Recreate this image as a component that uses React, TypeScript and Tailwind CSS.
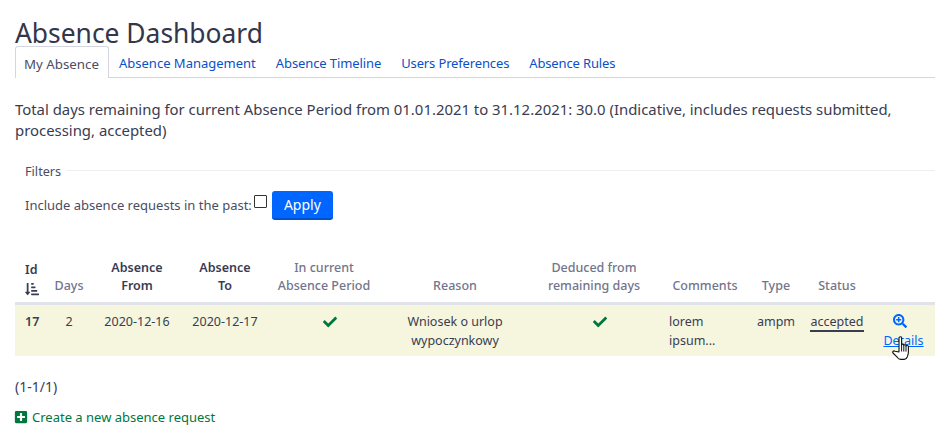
import { FaCheck, FaPlusSquare, FaSearchPlus, FaSortAmountDownAlt } from 'react-icons/fa'

const tabs = [
  { label: 'Absence Management', className: 'tracking-normal' },
  { label: 'Absence Timeline', className: 'tracking-[-0.1px]' },
  { label: 'Users Preferences', className: 'tracking-[-0.14px]' },
  { label: 'Absence Rules', className: 'tracking-[-0.14px]' },
]

const HandCursor = () => (
  <svg className="absolute left-[9px] top-[24px]" width="18" height="25" viewBox="0 0 18 25">
    <path
      d="M7 2c0-1.6 2.6-1.6 2.6 0v7c0-1.2 2.2-1.2 2.2 0v.6c0-1.2 2.2-1.2 2.2 0v.6c0-1.2 2.4-1 2.4.4v5.4c0 2.6-.8 3.6-1.2 5-.4 1.2-1.4 2.4-3 2.4H8.6c-1.8 0-2.6-1-3.4-2.2L1 17c-.9-1.4.8-2.6 2-1.8L7 16z"
      fill="#fff"
      stroke="#111"
      strokeWidth="1.1"
      strokeLinejoin="round"
    />
    <path d="M9.6 9v6.5M11.8 9.6v6M14 10.2v5.4" stroke="#111" strokeWidth="1" />
  </svg>
)

export default function App() {
  return (
    <div className="w-[950px] h-[439px] overflow-hidden bg-white pl-[15px] pr-[15px] text-[#3a3c52] font-['Noto_Sans',sans-serif]">
      <h1 className="pt-[14px] text-[26.4px] leading-[38px] h-[46px] text-[#34364a]">Absence Dashboard</h1>

      <nav className="flex h-[32px] border-b border-[#d3d5e0] text-[13px]">
        <div className="h-[32px] w-[94px] pl-[8px] pt-[1px] leading-[32px] text-[13.3px] bg-white border border-b-0 border-[#d3d5e0] rounded-t-[3px] text-[#4b4d63]">
          My Absence
        </div>
        {tabs.map((tab) => (
          <a key={tab.label} className={`px-[10px] pt-[1px] leading-[32px] text-[#0a50c8] ${tab.className}`}>
            {tab.label}
          </a>
        ))}
      </nav>

      <p className="mt-[21px] text-[14.9px] leading-[21px] w-[905px]">
        Total days remaining for current Absence Period from 01.01.2021 to 31.12.2021: 30.0 (Indicative, includes requests submitted, processing, accepted)
      </p>

      <div className="mt-[18px] flex items-center">
        <span className="w-[9px]" />
        <span className="px-[1px] pt-[2px] text-[12.7px] leading-[20px] text-[#4b4d63]">Filters</span>
        <span className="ml-[5px] flex-1 border-t border-[#eeeeee]" />
      </div>

      <div className="mt-[9px] pl-[10px] flex items-center text-[13px] h-[30px] text-[#4b4d63]">
        <span className="pt-[2px]">Include absence requests in the past:</span>
        <span className="ml-[2px] mb-[8px] w-[13px] h-[13px] border border-[#333] rounded-[1px]" />
        <button className="ml-[5px] w-[61px] h-[29px] bg-[#0066ff] border-b-2 border-[#0052cc] rounded-[3px] text-white text-[14px]">
          Apply
        </button>
      </div>

      <table className="mt-[39px] w-[920px] table-fixed text-[12.5px] leading-[19px]">
        <colgroup>
          <col className="w-[33px]" />
          <col className="w-[42px]" />
          <col className="w-[94px]" />
          <col className="w-[82px]" />
          <col className="w-[116px]" />
          <col className="w-[146px]" />
          <col className="w-[132px]" />
          <col className="w-[90px]" />
          <col className="w-[52px]" />
          <col className="w-[70px]" />
          <col className="w-[63px]" />
        </colgroup>
        <thead>
          <tr className="border-b-[3px] border-[#e1e3ea] text-center align-bottom leading-[18px] font-medium text-[#72758c]">
            <th className="pl-[10px] pb-[6px] text-left font-semibold text-[#3a3c52]">
              Id
              <FaSortAmountDownAlt className="mt-[3px] text-[14px]" />
            </th>
            <th className="pb-[7px] font-medium">Days</th>
            <th className="pb-[7px] font-semibold text-[#3a3c52]">
              Absence
              <br />
              From
            </th>
            <th className="pb-[7px] font-semibold text-[#3a3c52]">
              Absence
              <br />
              To
            </th>
            <th className="pb-[7px] font-medium">
              In current
              <br />
              Absence Period
            </th>
            <th className="pb-[7px] font-medium">Reason</th>
            <th className="pb-[7px] font-medium">
              Deduced from
              <br />
              remaining days
            </th>
            <th className="pb-[7px] font-medium">Comments</th>
            <th className="pb-[7px] font-medium">Type</th>
            <th className="pb-[7px] font-medium">Status</th>
            <th />
          </tr>
        </thead>
        <tbody>
          <tr className="h-[52px] bg-[#f6f6de] text-center align-top">
            <td className="pl-[10px] pt-[7px] text-left font-semibold">17</td>
            <td className="pt-[7px]">2</td>
            <td className="pt-[7px]">2020-12-16</td>
            <td className="pt-[7px]">2020-12-17</td>
            <td className="pt-[7px] pl-[12px]">
              <FaCheck className="mx-auto mt-[3px] text-[14px] text-[#00773c]" />
            </td>
            <td className="pt-[7px]">
              Wniosek o urlop
              <br />
              wypoczynkowy
            </td>
            <td className="pt-[7px] pl-[12px]">
              <FaCheck className="mx-auto mt-[3px] text-[14px] text-[#00773c]" />
            </td>
            <td className="pt-[7px] pl-[9px] text-left">
              lorem
              <br />
              ipsum...
            </td>
            <td className="pt-[7px]">ampm</td>
            <td className="pt-[7px]">
              <span className="border-b-2 border-[#3a3c52]">accepted</span>
            </td>
            <td className="pt-[7px]">
              <div className="relative inline-block text-[#0066ff]">
                <FaSearchPlus className="ml-[10px] mt-[2px] mb-[3px] text-[14px]" />
                <a className="underline">Details</a>
                <HandCursor />
              </div>
            </td>
          </tr>
        </tbody>
      </table>

      <p className="mt-[21px] text-[14px] leading-[19px]">(1-1/1)</p>

      <a className="mt-[12px] flex items-center text-[13px] leading-[19px] text-[#00773c]">
        <FaPlusSquare className="-ml-[1px] mr-[4px] text-[14px]" />
        Create a new absence request
      </a>
    </div>
  )
}
